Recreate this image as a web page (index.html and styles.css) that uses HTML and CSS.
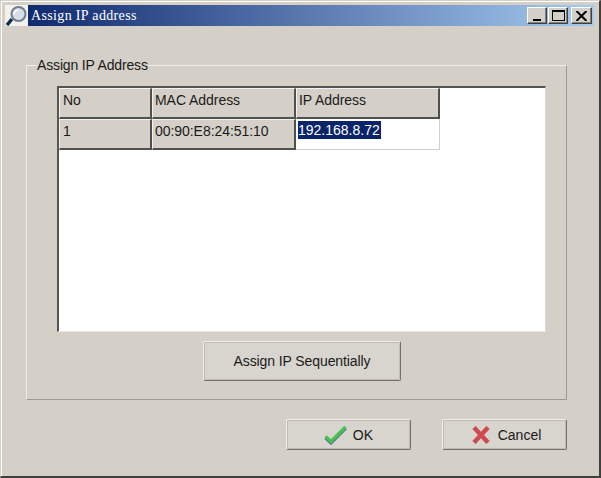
FILE: index.html
```html
<!DOCTYPE html>
<html lang="en">
  <head>
    <meta charset="UTF-8" />
    <title>Assign IP address</title>
    <link rel="stylesheet" href="styles.css">
  </head>
  <body>
    <div class="window">
      <div class="titlebar">
        <svg class="appicon" width="23" height="21" viewBox="0 0 23 21">
          <rect width="23" height="21" fill="#f2f1ee"/>
          <path d="M7 14L2 20" stroke="#12304a" stroke-width="3.500"/>
          <circle cx="13.500" cy="9" r="7" fill="#d8dee6" stroke="#6f7f94" stroke-width="2"/>
          <path d="M9 9.500a4.500 4.500 0 0 1 4.500-4.500" fill="none" stroke="#fff" stroke-width="1.500"/>
        </svg>
        <span class="title">Assign IP address</span>
        <div class="winbtns">
          <button class="winbtn"><span class="min"></span></button>
          <button class="winbtn"><span class="max"></span></button>
          <button class="winbtn close">
            <svg width="11" height="10" viewBox="0 0 11 10"><path d="M0.500 0L10.500 10M10.500 0L0.500 10" stroke="#000" stroke-width="2"/></svg>
          </button>
        </div>
      </div>

      <fieldset class="group">
        <legend>Assign IP Address</legend>
        <div class="tablebox">
          <div class="grid">
            <div class="cell head lead">No</div>
            <div class="cell head">MAC Address</div>
            <div class="cell head">IP Address</div>
            <div class="cell head lead">1</div>
            <div class="cell head">00:90:E8:24:51:10</div>
            <div class="cell edit"><span class="selected">192.168.8.72</span></div>
          </div>
        </div>
        <div class="seqrow">
          <button class="btn seq">Assign IP Sequentially</button>
        </div>
      </fieldset>

      <div class="actions">
        <button class="btn action">
          <svg width="23" height="20" viewBox="0 0 23 20">
            <path d="M1.500 13L7 18L21.500 3.500" fill="none" stroke="#3f62a8" stroke-width="3"/>
            <path d="M1.500 11.500L7 16.500L21.500 2" fill="none" stroke="#4cc04c" stroke-width="3.500"/>
          </svg>
          <span class="oklabel">OK</span>
        </button>
        <button class="btn action cancel">
          <svg width="18" height="18" viewBox="0 0 18 18">
            <path d="M2 1.500L16 16.500M16 1.500L2 16.500" stroke="#cf4a4e" stroke-width="4.500"/>
          </svg>
          <span>Cancel</span>
        </button>
      </div>
    </div>
  </body>
</html>
```
FILE: styles.css
```css
html, body {
  margin: 0;
  padding: 0;
}
body {
  width: 601px;
  height: 478px;
  overflow: hidden;
  font-family: "Liberation Sans", Arial, sans-serif;
  font-size: 14px;
  color: #1a1a1a;
  background: #d4d0c8;
}
.window {
  box-sizing: border-box;
  width: 601px;
  height: 478px;
  padding: 5px 5px 4px 5px;
  background: #d4d0c8;
  border-top: 1px solid #d4d0c8;
  border-left: 1px solid #d4d0c8;
  border-right: 2px solid #404040;
  border-bottom: 2px solid #404040;
  box-shadow: inset 1px 1px 0 #fff;
}
.titlebar {
  display: flex;
  align-items: center;
  height: 21px;
  margin-left: -1px;
  margin-top: -1px;
  background: linear-gradient(to right, #0a246a, #a6caf0);
}
.appicon {
  flex: none;
}
.title {
  margin-left: 3px;
  font-family: "Liberation Serif", serif;
  font-size: 14px;
  letter-spacing: 0.35px;
  color: #fff;
}
.winbtns {
  margin-left: auto;
  margin-right: 2px;
  display: flex;
  gap: 1px;
}
.winbtn {
  box-sizing: border-box;
  display: flex;
  align-items: center;
  justify-content: center;
  width: 20px;
  height: 17px;
  padding: 0;
  background: #d4d0c8;
  border: 1px solid;
  border-color: #fff #404040 #404040 #fff;
  box-shadow: inset -1px -1px 0 #808080;
}
.winbtn.close {
  width: 21px;
  margin-left: 2px;
}
.min {
  width: 8px;
  height: 2px;
  margin-top: 9px;
  background: #000;
}
.max {
  box-sizing: border-box;
  width: 13px;
  height: 11px;
  border: 1px solid #000;
  border-top-width: 2px;
}
.group {
  box-sizing: border-box;
  width: 541px;
  height: 342px;
  margin: 32px 0 0 20px;
  padding: 13px 20px 0 30px;
  border: none;
  border-top: 1px solid #f0eeea;
  border-left: 1px solid #f0eeea;
  border-right: 1px solid #9a9a94;
  border-bottom: 1px solid #9a9a94;
}
.group legend {
  padding: 0;
  margin-left: -20px;
  line-height: 15px;
  letter-spacing: -0.15px;
}
.tablebox {
  box-sizing: border-box;
  width: 489px;
  height: 246px;
  background: #fff;
  border-top: 2px solid #555;
  border-left: 2px solid #555;
  border-right: 1px solid #d8d8d8;
  border-bottom: 1px solid #e8e8e4;
}
.grid {
  display: grid;
  grid-template-columns: 93px 144px 144px;
  grid-auto-rows: 31px;
  width: 381px;
}
.cell {
  box-sizing: border-box;
  padding: 2px 0 0 2px;
  line-height: 18px;
  letter-spacing: -0.05px;
}
.head {
  background: #d4d0c8;
  border-right: 2px solid #505050;
  border-bottom: 2px solid #505050;
  border-top: 1px solid #f4f2ee;
  border-left: 1px solid #f4f2ee;
}
.lead {
  padding-left: 3px;
}
.edit {
  background: #fff;
  border-right: 1px solid #d0d0d0;
  border-bottom: 1px solid #d0d0d0;
  letter-spacing: 0;
}
.selected {
  display: inline-block;
  background: #0a246a;
  color: #fff;
  padding-right: 1px;
}
.seqrow {
  display: flex;
  padding: 9px 0 0 146px;
}
.btn {
  box-sizing: border-box;
  font-family: inherit;
  font-size: 14px;
  color: #1a1a1a;
  background: #d8d5ce;
  border: 1px solid;
  border-color: #f0eeea #707070 #707070 #f0eeea;
  border-radius: 2px;
  box-shadow: 0 0 0 1px #c0bcb4 inset;
  padding: 0;
}
.seq {
  width: 198px;
  height: 40px;
  letter-spacing: -0.1px;
}
.actions {
  display: flex;
  justify-content: flex-end;
  gap: 31px;
  margin-top: 19px;
  margin-right: 27px;
}
.action {
  display: flex;
  align-items: center;
  justify-content: center;
  gap: 6px;
  width: 125px;
  height: 31px;
}
.cancel {
  gap: 8px;
  padding-left: 4px;
}
.oklabel {
  letter-spacing: 0.2px;
}
```
